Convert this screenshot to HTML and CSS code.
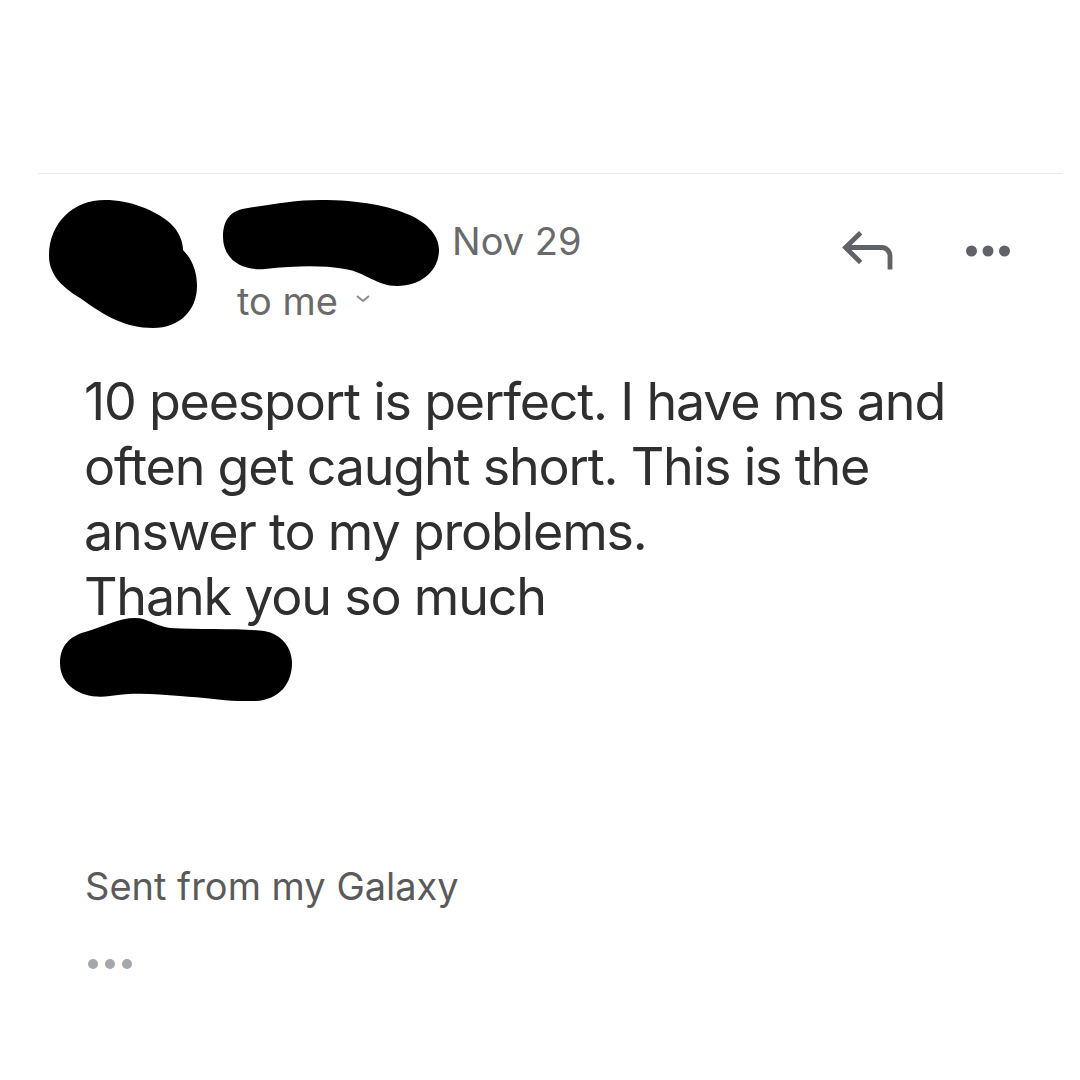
FILE: index.html
```html
<!DOCTYPE html>
<html lang="en">
<head>
<meta charset="utf-8">
<title>Message</title>
<link rel="stylesheet" href="styles.css">
</head>
<body>
<div class="page">
  <div class="divider"></div>
  <div class="header">
    <svg class="avatar" width="152" height="130" viewBox="0 0 152 130" aria-label="redacted">
      <path d="M4,58 C4,25 28,2 60,2 C85,2 110,12 125,25 C135,34 138,45 138,52 C148,62 152,75 152,88 C152,112 135,130 108,130 C80,130 60,118 35,100 C15,88 4,75 4,58 Z" fill="#000"/>
    </svg>
    <div class="meta">
      <div class="name-row">
        <svg class="name-redact" width="227" height="87" viewBox="0 0 227 87" aria-label="redacted">
          <path d="M3,37 C3,18 12,10 28,8 C55,4 75,0 100,0 C140,0 170,6 192,16 C208,24 219,36 219,50 C219,70 202,86 177,86 C157,86 145,72 125,69 C100,65 75,66 45,69 C20,71 3,58 3,37 Z" fill="#000"/>
        </svg>
        <span class="date">Nov 29</span>
        <div class="actions">
          <svg class="reply" width="56" height="46" viewBox="0 0 56 46">
            <path d="M22.7,4.7 L7.5,19.5 L22.7,34.5 M7.5,19.5 H43.7 A8.3,8.3 0 0 1 52,27.8 V41.5" fill="none" stroke="#5f6368" stroke-width="4.8" stroke-linejoin="miter"/>
          </svg>
          <svg class="more" width="44" height="12" viewBox="0 0 44 12">
            <circle cx="5.5" cy="6" r="5.5" fill="#5f6368"/>
            <circle cx="22" cy="6" r="5.5" fill="#5f6368"/>
            <circle cx="38.5" cy="6" r="5.5" fill="#5f6368"/>
          </svg>
        </div>
      </div>
      <div class="to">to me
        <svg class="chev" width="16" height="9" viewBox="0 0 16 9"><path d="M2,2 L8,7 L14,2" fill="none" stroke="#8a8a8a" stroke-width="2"/></svg>
      </div>
    </div>
  </div>
  <div class="message">
    <p class="text">10 peesport is perfect. I have ms and<br>often get caught short. This is the<br>answer to my problems.<br>Thank you so much</p>
    <svg class="sig" width="232" height="83" viewBox="0 0 232 83" aria-label="redacted">
      <path d="M0,45 C0,28 10,18 25,14 C45,8 60,0 75,0 C88,0 95,8 110,10 C140,12 180,10 204,13 C222,16 232,30 232,45 C232,65 220,82 195,83 C170,84 150,80 120,78 C95,76 75,74 50,78 C25,82 0,70 0,45 Z" fill="#000"/>
    </svg>
    <p class="sent">Sent from my Galaxy</p>
    <svg class="trim" width="44" height="12" viewBox="0 0 44 12">
      <circle cx="5" cy="6" r="5" fill="#a4a7ab"/>
      <circle cx="22" cy="6" r="5" fill="#a4a7ab"/>
      <circle cx="39" cy="6" r="5" fill="#a4a7ab"/>
    </svg>
  </div>
</div>
</body>
</html>
```

FILE: styles.css
```css
html, body {
  margin: 0;
  padding: 0;
  background: #fff;
}
body {
  font-family: Inter, "Noto Sans", "Liberation Sans", sans-serif;
  width: 1080px;
  height: 1080px;
  overflow: hidden;
}
.page {
  display: flex;
  flex-direction: column;
}
.divider {
  margin-top: 173px;
  margin-left: 38px;
  width: 1025px;
  height: 1px;
  background: #e9e9e9;
}
.header {
  display: flex;
  margin-top: 24px;
}
.avatar {
  display: block;
  margin-left: 45px;
  flex: none;
}
.meta {
  display: flex;
  flex-direction: column;
  margin-left: 23px;
  flex: 1;
}
.name-row {
  display: flex;
  align-items: flex-start;
}
.name-redact {
  display: block;
  margin-top: 2px;
  flex: none;
}
.date {
  font-size: 38px;
  line-height: 46px;
  color: #6a6a6a;
  margin-top: 20px;
  margin-left: 5px;
}
.actions {
  display: flex;
  align-items: flex-start;
  margin-left: auto;
  margin-right: 70px;
}
.reply {
  display: block;
  margin-top: 30px;
}
.more {
  display: block;
  margin-top: 47px;
  margin-left: 72px;
}
.to {
  font-size: 38px;
  line-height: 28px;
  color: #6a6a6a;
  padding-left: 17px;
  display: flex;
  align-items: center;
}
.chev {
  display: block;
  margin-left: 17px;
  margin-top: -6px;
}
.message {
  display: flex;
  flex-direction: column;
  align-items: flex-start;
  margin-top: 41px;
}
.text {
  margin: 0;
  padding-left: 84px;
  font-size: 52px;
  line-height: 65px;
  letter-spacing: -1.2px;
  color: #2f2f2f;
}
.sig {
  display: block;
  margin-left: 60px;
  margin-top: -11px;
}
.sent {
  margin: 162px 0 0;
  padding-left: 85px;
  font-size: 38px;
  line-height: 46px;
  color: #5a5a5a;
}
.trim {
  display: block;
  margin-left: 88px;
  margin-top: 49px;
}
```
